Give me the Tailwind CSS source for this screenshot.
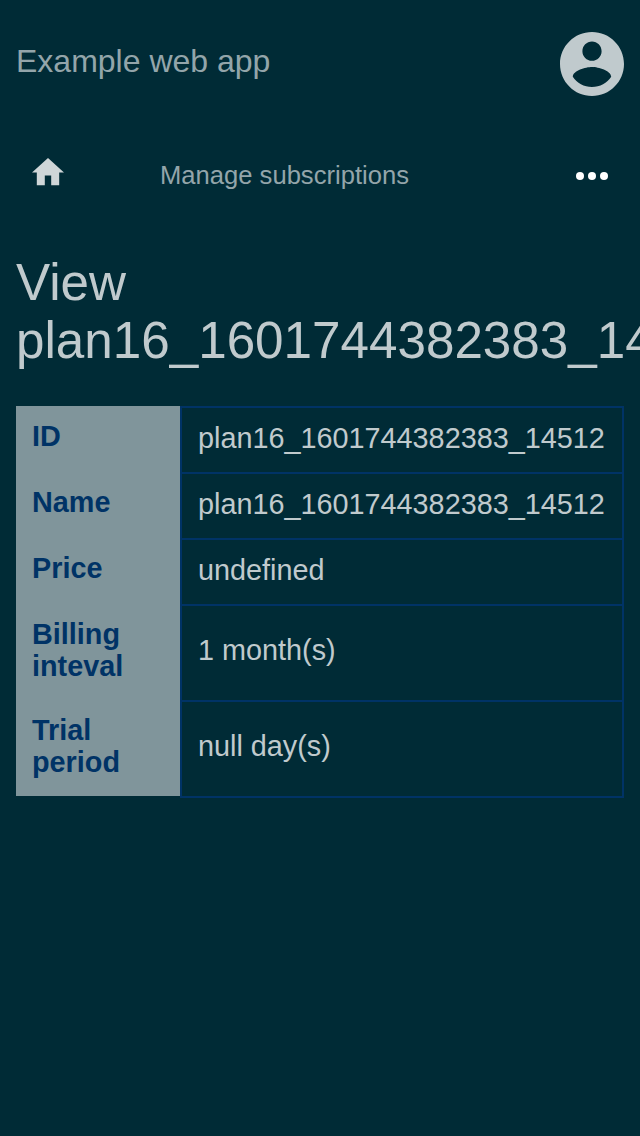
<!DOCTYPE html>
<html lang="en">
<head>
<meta charset="utf-8">
<title>Example web app</title>
<script src="https://cdn.jsdelivr.net/npm/@tailwindcss/browser@4"></script>
</head>
<body class="bg-[#002b36] h-[1136px] overflow-hidden font-['Liberation_Sans',Arial,sans-serif] text-[#c0cacd]">
<header class="flex justify-between px-4 pt-8 h-32">
  <div class="text-[32px] leading-[58px] text-[#93a5aa]">Example web app</div>
  <svg class="size-16" viewBox="2 2 20 20" fill="#c0cacd"><path d="M12 2C6.48 2 2 6.48 2 12s4.480 10 10 10 10-4.480 10-10S17.520 2 12 2zm0 3c1.660 0 3 1.340 3 3s-1.340 3-3 3-3-1.340-3-3 1.340-3 3-3zm0 14.200c-2.500 0-4.710-1.280-6-3.220.030-1.990 4-3.080 6-3.080 1.990 0 5.970 1.090 6 3.080-1.290 1.940-3.500 3.220-6 3.220z"/></svg>
</header>
<nav class="flex h-24 px-8">
  <svg class="w-8 h-[27.2px] mt-[30.4px]" viewBox="2 3 20 17" fill="#cfd6d8"><path d="M10 20v-6h4v6h5v-8h3L12 3 2 12h3v8z"/></svg>
  <div class="ml-24 text-[25.6px] leading-[94px] text-[#93a5aa] grow">Manage subscriptions</div>
  <svg class="size-8 mt-8" viewBox="0 0 32 32" fill="#fff"><circle cx="4" cy="16" r="4"/><circle cx="16" cy="16" r="4"/><circle cx="28" cy="16" r="4"/></svg>
</nav>
<main class="px-4 pt-[30px]">
  <h1 class="text-[51.2px] leading-[58px]">View plan16_1601744382383_14512</h1>
  <div class="mt-9 grid grid-cols-[164px_1fr] text-[28.8px] leading-8">
    <div class="bg-[#80959b] text-[#003366] font-bold h-[390px]">
      <div class="h-[66px] px-4 pt-[14px]">ID</div>
      <div class="h-[66px] px-4 pt-[14px]">Name</div>
      <div class="h-[66px] px-4 pt-[14px]">Price</div>
      <div class="h-24 px-4 pt-[14px]">Billing inteval</div>
      <div class="h-24 px-4 pt-[14px]">Trial period</div>
    </div>
    <div class="border-2 border-[#003366] h-[392px] divide-y-2 divide-[#003366]">
      <div class="h-[66px] px-4 pt-[14px]">plan16_1601744382383_14512</div>
      <div class="h-[66px] px-4 pt-[14px]">plan16_1601744382383_14512</div>
      <div class="h-[66px] px-4 pt-[14px]">undefined</div>
      <div class="h-24 px-4 pt-7">1 month(s)</div>
      <div class="h-24 px-4 pt-7">null day(s)</div>
    </div>
  </div>
</main>
</body>
</html>
